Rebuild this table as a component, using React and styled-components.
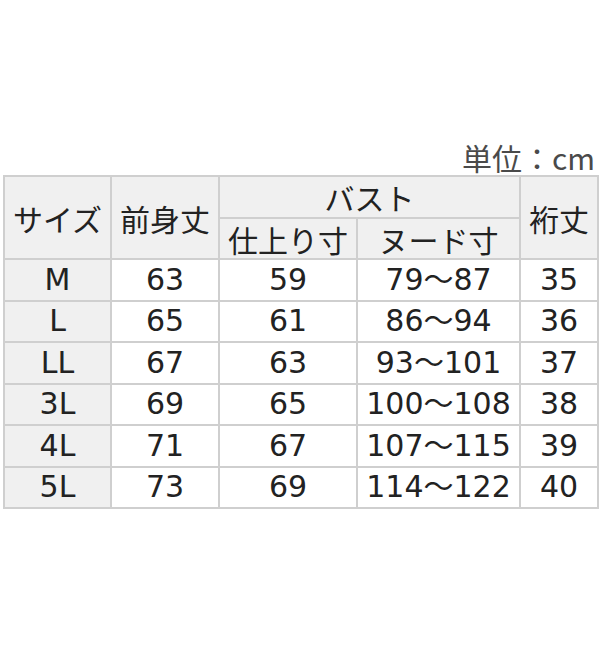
import React from 'react';
import styled, { createGlobalStyle } from 'styled-components';

const GlobalStyle = createGlobalStyle`
  html, body {
    margin: 0;
    padding: 0;
    background: #ffffff;
  }
  body {
    width: 600px;
    height: 660px;
    font-family: "DejaVu Sans", "Noto Sans CJK JP", sans-serif;
  }
`;

const Page = styled.div`
  width: 600px;
  height: 660px;
  padding: 139px 3px 0 3px;
  box-sizing: border-box;
`;

const Unit = styled.div`
  text-align: right;
  height: 36px;
  line-height: 36px;
  font-size: 30px;
  color: #4a4a4a;
  font-family: "Noto Sans CJK JP", sans-serif;
  padding-right: 2px;
`;

const Table = styled.table`
  border-collapse: collapse;
  table-layout: fixed;
  width: 594px;
  font-size: 30px;
  color: #222222;
`;

const Row = styled.tr`
  height: ${(p) => p.$h}px;
`;

const Cell = styled.td`
  border: 2px solid #cfcfcf;
  padding: 0;
  text-align: center;
  vertical-align: middle;
  line-height: 1;
  font-weight: normal;
  white-space: nowrap;
  background: ${(p) => (p.$head ? '#f0f0f0' : '#ffffff')};
  font-family: ${(p) =>
    p.$jp ? '"Noto Sans CJK JP", sans-serif' : '"DejaVu Sans", "Noto Sans CJK JP", sans-serif'};
`;

const rows = [
  ['M', '63', '59', '79～87', '35'],
  ['L', '65', '61', '86～94', '36'],
  ['LL', '67', '63', '93～101', '37'],
  ['3L', '69', '65', '100～108', '38'],
  ['4L', '71', '67', '107～115', '39'],
  ['5L', '73', '69', '114～122', '40'],
];

export default function App() {
  return (
    <Page>
      <GlobalStyle />
      <Unit>単位：cm</Unit>
      <Table>
        <colgroup>
          <col style={{ width: 107 }} />
          <col style={{ width: 108 }} />
          <col style={{ width: 138 }} />
          <col style={{ width: 163 }} />
          <col style={{ width: 78 }} />
        </colgroup>
        <thead>
          <Row $h={42}>
            <Cell as="th" rowSpan={2} $head $jp>サイズ</Cell>
            <Cell as="th" rowSpan={2} $head $jp>前身丈</Cell>
            <Cell as="th" colSpan={2} $head $jp>バスト</Cell>
            <Cell as="th" rowSpan={2} $head $jp>裄丈</Cell>
          </Row>
          <Row $h={41}>
            <Cell as="th" $head $jp>仕上り寸</Cell>
            <Cell as="th" $head $jp>ヌード寸</Cell>
          </Row>
        </thead>
        <tbody>
          {rows.map((r) => (
            <Row $h={41.5} key={r[0]}>
              <Cell $head>{r[0]}</Cell>
              {r.slice(1).map((v, i) => (
                <Cell key={i}>{v}</Cell>
              ))}
            </Row>
          ))}
        </tbody>
      </Table>
    </Page>
  );
}
